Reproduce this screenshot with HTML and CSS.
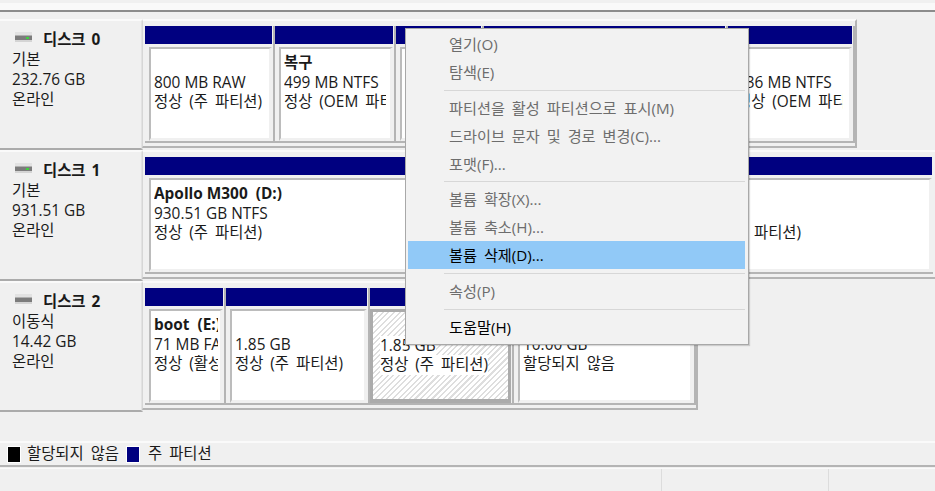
FILE: index.html
```html
<!DOCTYPE html>
<html lang="ko">
<head>
<meta charset="utf-8">
<title>디스크 관리</title>
<link rel="stylesheet" href="styles.css">
</head>
<body>
<svg class="defs" width="0" height="0" aria-hidden="true">
  <symbol id="drive" viewBox="0 0 17 10">
    <rect x="0" y="0" width="17" height="3" fill="#e2e2e2"/>
    <rect x="0" y="3" width="17" height="1" fill="#b0b0b0"/>
    <rect x="0" y="4" width="17" height="4" fill="#7c7c7c"/>
    <rect x="0" y="8" width="17" height="2" fill="#d4d4d4"/>
  </symbol>
</svg>
<div class="toolbar-strip"></div>
<main class="disks">
  <section class="disk">
    <div class="head">
      <div class="head-title"><span class="drive"><svg width="17" height="10"><use href="#drive"/></svg><i class="led"></i></span><b>디스크 0</b></div>
      <div>기본</div><div>232.76 GB</div><div>온라인</div>
    </div>
    <div class="frame frame-0">
      <div class="part w-130"><div class="bar"></div><div class="body"><p>&nbsp;</p><p>800 MB RAW</p><p class="ko">정상 (주 파티션)</p></div></div>
      <div class="part w-121"><div class="bar"></div><div class="body"><p><b>복구</b></p><p>499 MB NTFS</p><p class="ko">정상 (OEM 파티션)</p></div></div>
      <div class="part w-88"><div class="bar"></div><div class="body"><p>&nbsp;</p><p>100 MB</p><p class="ko">정상</p></div></div>
      <div class="part w-244"><div class="bar"></div><div class="body"><p>&nbsp;</p><p>230 GB NTFS</p><p class="ko">정상 (부팅)</p></div></div>
      <div class="part w-127"><div class="bar"></div><div class="body"><p>&nbsp;</p><p>736 MB NTFS</p><p class="ko">정상 (OEM 파티션)</p></div></div>
    </div>
  </section>
  <section class="disk">
    <div class="head">
      <div class="head-title"><span class="drive"><svg width="17" height="10"><use href="#drive"/></svg><i class="led"></i></span><b>디스크 1</b></div>
      <div>기본</div><div>931.51 GB</div><div>온라인</div>
    </div>
    <div class="frame frame-1">
      <div class="part w-539"><div class="bar"></div><div class="body"><p><b>Apollo M300&nbsp; (D:)</b></p><p>930.51 GB NTFS</p><p class="ko">정상 (주 파티션)</p></div></div>
      <div class="part w-249"><div class="bar"></div><div class="body"><p>&nbsp;</p><p>1.00 GB</p><p class="ko">정상 (주 파티션)</p></div></div>
    </div>
  </section>
  <section class="disk">
    <div class="head">
      <div class="head-title"><span class="drive"><svg width="17" height="10"><use href="#drive"/></svg></span><b>디스크 2</b></div>
      <div>이동식</div><div>14.42 GB</div><div>온라인</div>
    </div>
    <div class="frame frame-2">
      <div class="part w-81"><div class="bar"></div><div class="body"><p><b>boot&nbsp; (E:)</b></p><p>71 MB FAT32</p><p class="ko">정상 (활성, 주 파티션)</p></div></div>
      <div class="part w-144"><div class="bar"></div><div class="body"><p>&nbsp;</p><p>1.85 GB</p><p class="ko">정상 (주 파티션)</p></div></div>
      <div class="part w-144 selected"><div class="bar"></div><div class="body"><p>&nbsp;</p><p><span>1.85 GB</span></p><p class="ko"><span>정상 (주 파티션)</span></p></div></div>
      <div class="part w-182"><div class="bar black"></div><div class="body"><p>&nbsp;</p><p>10.00 GB</p><p class="ko">할당되지 않음</p></div></div>
    </div>
  </section>
</main>
<div class="legend ko">
  <i class="swatch black"></i><span>할당되지 않음</span>
  <i class="swatch navy"></i><span>주 파티션</span>
</div>
<footer class="status"><div class="cell cell-a"></div><div class="cell cell-b"></div><div class="cell"></div></footer>
<nav class="menu ko">
  <div class="item off">열기(O)</div>
  <div class="item off">탐색(E)</div>
  <hr>
  <div class="item off">파티션을 활성 파티션으로 표시(M)</div>
  <div class="item off">드라이브 문자 및 경로 변경(C)...</div>
  <div class="item off">포맷(F)...</div>
  <hr class="short">
  <div class="item off">볼륨 확장(X)...</div>
  <div class="item off">볼륨 축소(H)...</div>
  <div class="item hover">볼륨 삭제(D)...</div>
  <hr>
  <div class="item off">속성(P)</div>
  <hr>
  <div class="item">도움말(H)</div>
</nav>
</body>
</html>
```

FILE: styles.css
```css
* { box-sizing: border-box; }
html, body { margin: 0; height: 491px; overflow: hidden; }
body {
  position: relative;
  background: #f0f0f0;
  color: #1a1a1a;
  font-family: "Open Sans", "Noto Sans CJK KR", sans-serif;
  font-size: 15.4px;
  line-height: 20px;
}
.defs { position: absolute; }
p { margin: 0; white-space: nowrap; overflow: hidden; }
.ko { word-spacing: 3px; }

.toolbar-strip {
  height: 12px;
  border-top: 3px solid #f0f0f0;
  background: #f9f9f9;
  border-bottom: 2px solid #8c8c8c;
}
.disks { padding-top: 7px; height: 429px; }
.disk { display: flex; height: 131px; align-items: flex-start; }

.head {
  width: 143px;
  height: 131px;
  padding: 9px 0 0 12px;
  border-top: 2px solid #fafafa;
  border-right: 2px solid #e2e2e2;
  border-bottom: 2px solid #ababab;
  flex: none;
}
.head-title { display: flex; align-items: center; height: 20px; word-spacing: 2px; }
.drive { position: relative; width: 17px; height: 10px; margin: -6px 11px 0 3px; display: block; }
.drive svg { display: block; }
.led { position: absolute; left: 11px; top: 5px; width: 3px; height: 2px; background: #3fd23f; }

.frame {
  display: flex;
  height: 129px;
  padding: 5px 0 0 2px;
  margin-left: -1px;
  border-top: 2px solid #fafafa;
  border-left: 1px solid #d6d6d6;
  border-right: 2px solid #b4b4b4;
  border-bottom: 2px solid #b4b4b4;
  background: #f0f0f0;
}
.frame-0 { width: 715px; }
.frame-1 { width: 800px; border-right: 0; }
.frame-2 { width: 556px; }

.part { flex: none; height: 117px; display: flex; flex-direction: column; border-bottom: 2px solid #b4b4b4; border-right: 2px solid #b4b4b4; padding-right: 1px; }
.w-130 { width: 130px; }
.w-121 { width: 121px; }
.w-88 { width: 88px; }
.w-244 { width: 244px; }
.w-127 { width: 127px; }
.w-539 { width: 539px; }
.w-249 { width: 249px; border-right: 0; }
.w-81 { width: 81px; }
.w-144 { width: 144px; }
.w-182 { width: 182px; }
.w-121 p { max-width: 102px; }
.w-127 p { max-width: 106px; }
.w-81 p { max-width: 64px; }

.bar { height: 18px; background: #000080; flex: none; }
.bar.black { background: #000; }

.body {
  flex: 1;
  min-height: 0;
  overflow: hidden;
  margin: 3px 0 0 4px;
  padding: 4px 0 0 3px;
  line-height: 19.5px;
  background: #fff;
  border-top: 2px solid #bcbcbc;
  border-left: 2px solid #bcbcbc;
  border-right: 3px solid #f0f0f0;
  border-bottom: 3px solid #f0f0f0;
}

.selected .body {
  margin-left: 0;
  padding-left: 7px;
  border: 3px solid #ababab;
  border-bottom-width: 4px;
  background: repeating-linear-gradient(135deg, #fff 0 2.5px, #dedede 2.5px 4px);
}
.selected .body span { background: #fff; }

.legend {
  display: flex;
  align-items: center;
  height: 26px;
  padding-left: 7px;
  border-top: 2px solid #fafafa;
  border-bottom: 2px solid #b4b4b4;
}
.swatch { width: 14px; height: 17px; flex: none; border: 1px solid #fff; margin-right: 6px; }
.swatch.black { background: #000; }
.swatch.navy { background: #000080; margin-left: 7px; margin-right: 8px; }

.status { display: flex; height: 25px; border-top: 1px solid #fafafa; margin-top: 1px; }
.cell { flex: 1; }
.cell-a { flex: none; width: 662px; border-right: 1px solid #dcdcdc; }
.cell-b { flex: none; width: 167px; border-right: 1px solid #dcdcdc; }

.menu {
  position: absolute;
  left: 405px;
  top: 28px;
  width: 344px;
  padding: 1px 3px 3px 2px;
  background: #f2f2f2;
  border: 1px solid #a8a8a8;
  box-shadow: 1px 1px 1px rgba(0,0,0,.15);
  color: #000;
  font-size: 15.2px;
}
.item { height: 28px; line-height: 26px; padding-left: 41px; padding-top: 1px; white-space: nowrap; }
.item.off { color: #6d6d6d; }
.item.hover { background: #91c9f7; }
.menu hr { height: 8px; margin: 0 0 0 36px; border: 0; background: linear-gradient(#d7d7d7,#d7d7d7) center / 100% 1px no-repeat; }
.menu hr.short { height: 7px; }
```
